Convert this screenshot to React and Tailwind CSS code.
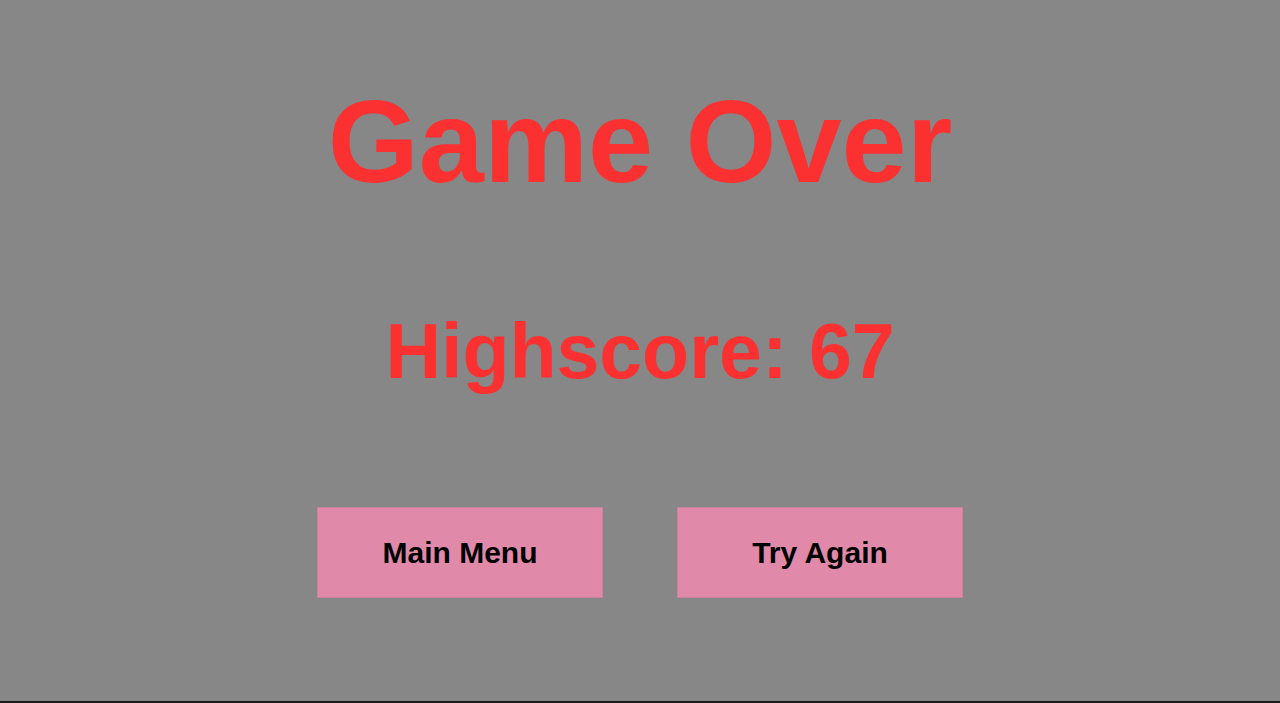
export default function App() {
  return (
    <div
      className="h-[703px] w-full bg-[#878787] border-b-2 border-[#1a1a1a] flex flex-col items-center pt-[83px]"
      style={{ fontFamily: '"Liberation Sans", Arial, sans-serif' }}
    >
      <h1 className="text-[117px] leading-none font-bold text-[#fb3030]">Game Over</h1>
      <p className="mt-[113px] text-[77px] leading-none font-bold text-[#fb3030]">Highscore: 67</p>
      <div className="mt-[117px] flex gap-[74px]">
        <button className="w-[286px] h-[91px] bg-[#e189a9] border border-[#c9839c] text-[30px] font-bold text-black">
          Main Menu
        </button>
        <button className="w-[286px] h-[91px] bg-[#e189a9] border border-[#c9839c] text-[30px] font-bold text-black">
          Try Again
        </button>
      </div>
    </div>
  );
}
